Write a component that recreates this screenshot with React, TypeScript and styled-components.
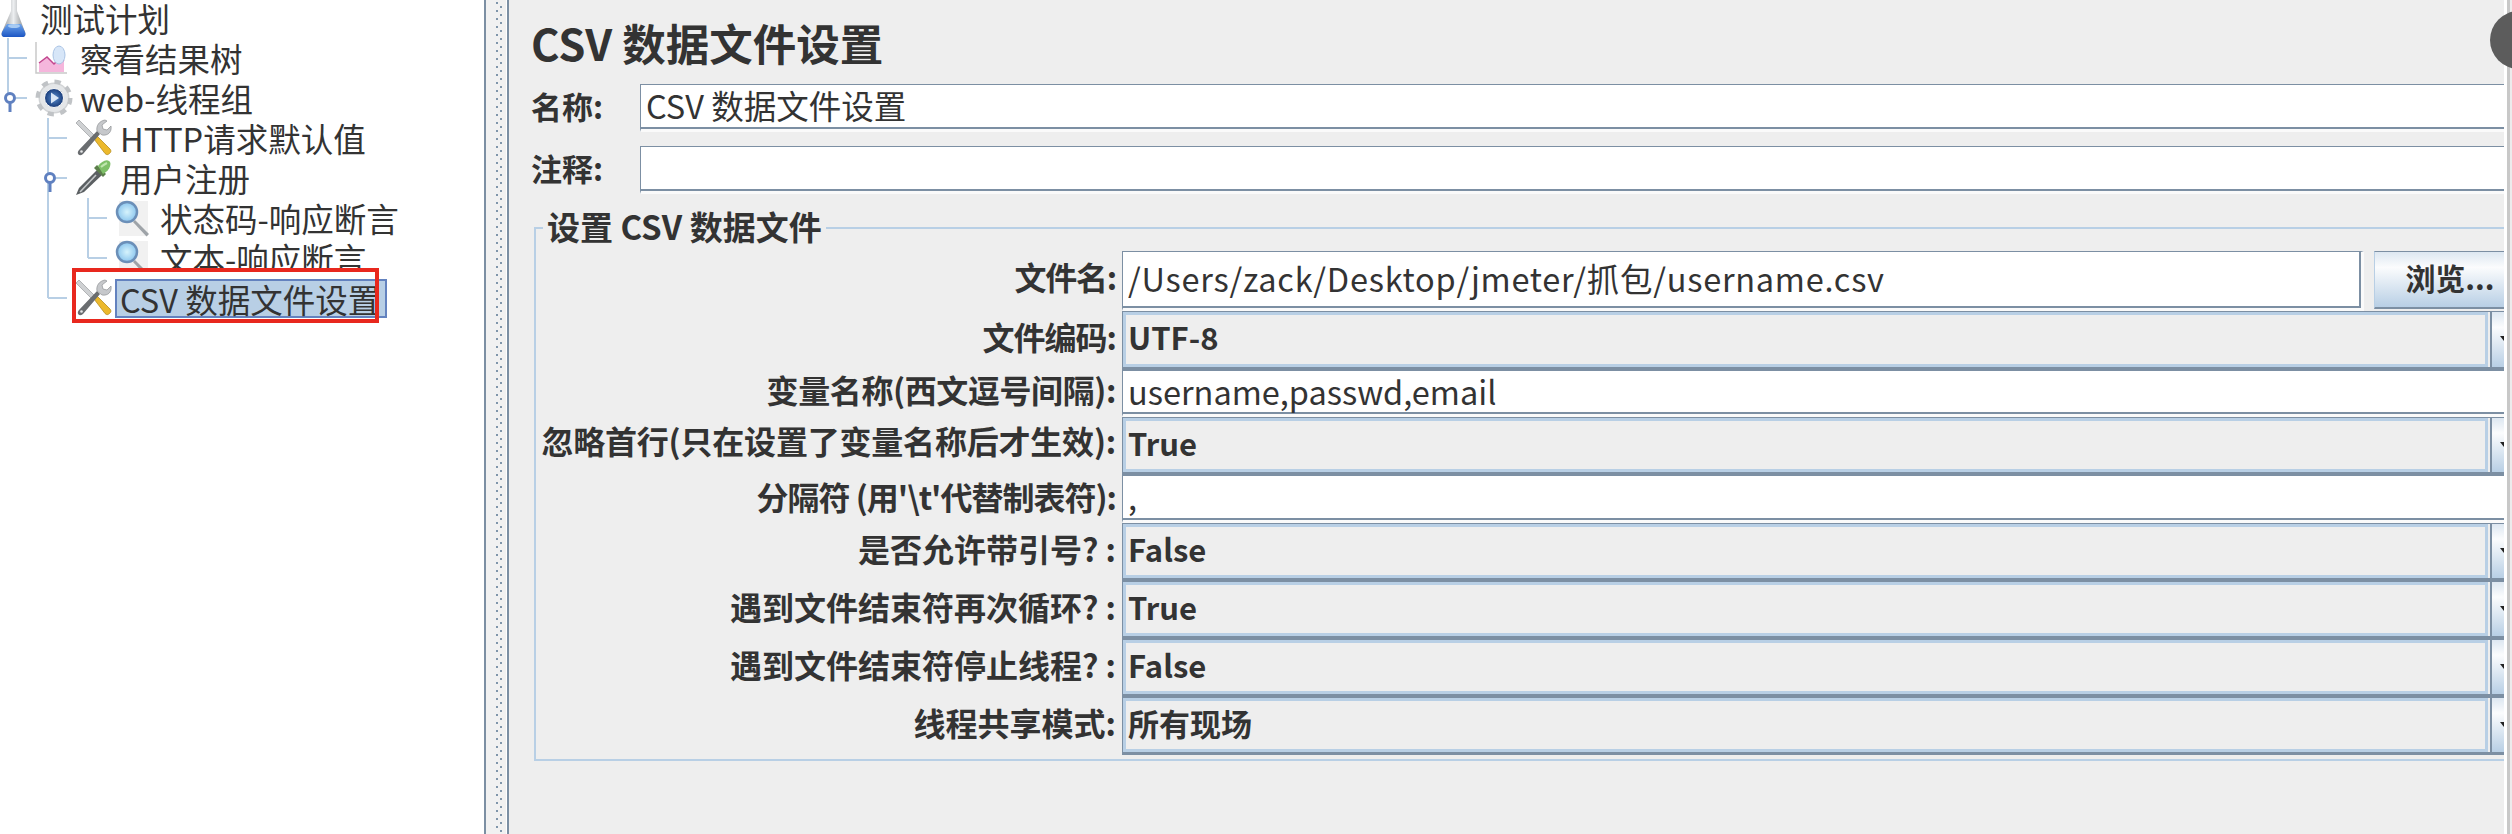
import styled, { createGlobalStyle } from 'styled-components';

const SLATE = '#7c8fa3';
const SKY = '#b8cfe5';
const FONT = '"Noto Sans CJK SC", "Noto Sans", sans-serif';

const GlobalStyle = createGlobalStyle`
  html, body {
    margin: 0;
    padding: 0;
    background: #fff;
    overflow: hidden;
  }
`;

const Window = styled.div`
  position: relative;
  display: flex;
  width: 2512px;
  height: 834px;
  overflow: hidden;
  font-family: ${FONT};
  color: #333;
`;

const TreePane = styled.div`
  flex: none;
  width: 484px;
  background: #fff;
`;

const TreeRow = styled.div<{ $selected?: boolean }>`
  position: relative;
  display: flex;
  align-items: center;
  height: 40px;
  white-space: nowrap;
  &:first-child {
    height: 36px;
    margin-bottom: 2px;
  }
  ${(p) =>
    p.$selected &&
    `
    z-index: 1;
    &::before {
      content: '';
      position: absolute;
      left: 72px;
      top: -10px;
      width: 307px;
      height: 55px;
      background: #fff;
    }
    &::after {
      content: '';
      position: absolute;
      left: 72px;
      top: -10px;
      width: 307px;
      height: 55px;
      box-sizing: border-box;
      border: 4px solid #e8281e;
    }
  `}
`;

const Connector = styled.svg`
  flex: none;
  display: block;
  height: 40px;
`;

const IconSlot = styled.div<{ $root: boolean }>`
  position: relative;
  flex: none;
  display: flex;
  align-items: center;
  width: ${(p) => (p.$root ? 35 : 40)}px;
  height: 36px;
  svg {
    display: block;
    flex: none;
    filter: blur(0.4px);
  }
`;

const NodeLabel = styled.span<{ $selected?: boolean }>`
  position: relative;
  box-sizing: border-box;
  padding: 0 3px;
  border: solid transparent;
  border-width: 0 2px;
  font-size: 32.5px;
  line-height: 36px;
  ${(p) =>
    p.$selected &&
    `
    height: 39px;
    padding-right: 5px;
    line-height: 35px;
    border: 2px solid #6382bf;
    background: ${SKY};
  `}
`;

const Divider = styled.div`
  flex: none;
  width: 25px;
  height: 100%;
  box-sizing: border-box;
  border-left: 2px solid ${SLATE};
  border-right: 2px solid ${SLATE};
  background:
    linear-gradient(#fff, #fff) 20px 0 / 1px 100% no-repeat,
    repeating-linear-gradient(#7f95aa 0 2px, transparent 2px 8px) 10px 2px / 2px 100% no-repeat,
    repeating-linear-gradient(#7f95aa 0 2px, transparent 2px 8px) 14px 6px / 2px 100% no-repeat,
    #f1f1f1;
`;

const FormPane = styled.div`
  flex: none;
  width: 1995px;
  height: 100%;
  box-sizing: border-box;
  padding-left: 22px;
  background: #eee;
`;

const Title = styled.h1`
  margin: 0;
  height: 84px;
  font-size: 43.5px;
  line-height: 86px;
  font-weight: 700;
`;

const NameRow = styled.div`
  display: flex;
  align-items: stretch;
  height: 48px;
  margin-bottom: 14px;
`;

const NameLabel = styled.label`
  flex: none;
  width: 109px;
  font-size: 31px;
  font-weight: 700;
  line-height: 44px;
`;

const TextInput = styled.input`
  flex: 1;
  min-width: 0;
  box-sizing: border-box;
  padding: 0 0 5px 5px;
  border: 0;
  border-top: 1px solid ${SLATE};
  border-left: 1px solid ${SLATE};
  border-bottom: 3px solid #fafafa;
  outline: none;
  border-radius: 0;
  background: #fff;
  box-shadow: inset 0 -2px 0 ${SLATE};
  color: #333;
  font-family: ${FONT};
  font-size: 32.5px;
`;

const FileInput = styled(TextInput)`
  border-right: 3px solid #fafafa;
  box-shadow: inset 0 -2px 0 ${SLATE}, inset -2px 0 0 ${SLATE};
  letter-spacing: 0.75px;
`;

const Group = styled.fieldset`
  margin: 11px 0 0 3px;
  padding: 3px 0 4px 0;
  min-width: 0;
  border: 2px solid ${SKY};
  border-right: 0;
`;

const GroupTitle = styled.legend`
  margin-left: 7px;
  padding: 0 4px 4px;
  font-size: 33px;
  font-weight: 700;
  line-height: 36px;
`;

const FieldRow = styled.div<{ $height: number }>`
  display: flex;
  align-items: stretch;
  height: ${(p) => p.$height}px;
`;

const FieldLabel = styled.label<{ $line?: number; $squeeze?: number }>`
  flex: none;
  box-sizing: border-box;
  width: 586px;
  padding-right: 6px;
  text-align: right;
  font-size: 32px;
  font-weight: 700;
  line-height: ${(p) => p.$line ?? 50}px;
  letter-spacing: ${(p) => p.$squeeze ?? 0}px;
  white-space: nowrap;
`;

const BrowseButton = styled.button`
  flex: none;
  width: 130px;
  height: 58px;
  margin-left: 10px;
  padding: 0 0 6px 21px;
  border: 0;
  border-top: 1px solid ${SLATE};
  border-left: 1px solid ${SKY};
  border-bottom: 2px solid ${SLATE};
  background: linear-gradient(#dde7f1, #fbfcfd 28%, ${SKY});
  color: #333;
  font-family: ${FONT};
  font-size: 30px;
  font-weight: 700;
  white-space: nowrap;
`;

const Combo = styled.div`
  flex: 1;
  display: flex;
  min-width: 0;
  box-sizing: border-box;
  border-top: 1px solid ${SLATE};
  border-left: 1px solid ${SLATE};
  border-bottom: 3px solid ${SLATE};
`;

const ComboValue = styled.div`
  flex: 1;
  box-sizing: border-box;
  padding-left: 2px;
  border: 3px solid ${SKY};
  background: #eee;
  font-size: 31px;
  font-weight: 700;
  line-height: 44px;
`;

const ComboArrow = styled.div`
  flex: none;
  display: flex;
  justify-content: flex-end;
  width: 14px;
  margin-left: 2px;
  padding-top: 24px;
  box-sizing: border-box;
  overflow: hidden;
  border-left: 2px solid ${SLATE};
  background: linear-gradient(#dde7f1, #fbfcfd 28%, ${SKY});
`;

const ArrowGlyph = styled.span`
  flex: none;
  width: 0;
  height: 0;
  margin-right: -4px;
  border-left: 4px solid transparent;
  border-right: 4px solid transparent;
  border-top: 5px solid #222;
`;

const EdgeStrip = styled.div`
  flex: none;
  width: 8px;
  height: 100%;
  background: linear-gradient(90deg, #fff 0 3px, #c8c8c8 3px 6px, #ececec 6px);
`;

const ScrollBlob = styled.div`
  position: absolute;
  top: 11px;
  right: -36px;
  width: 58px;
  height: 58px;
  border-radius: 50%;
  background: #5c5c5c;
`;

function FlaskIcon() {
  return (
    <svg width="27" height="37" viewBox="0 0 27 37">
      <defs>
        <linearGradient id="flaskGlass" x1="0" x2="1">
          <stop offset="0" stopColor="#8e9194" />
          <stop offset="0.5" stopColor="#eceef0" />
          <stop offset="1" stopColor="#85888b" />
        </linearGradient>
        <linearGradient id="flaskLiquid" x1="0" y1="0" x2="0" y2="1">
          <stop offset="0" stopColor="#6ea4ea" />
          <stop offset="1" stopColor="#1c56c4" />
        </linearGradient>
      </defs>
      <path d="M11 0h6v11l8 21c1 3 0 5-3 5H5c-3 0-4-2-3-5l9-21z" fill="url(#flaskGlass)" />
      <path d="M7 24h14l4 8c1 3 0 5-3 5H5c-3 0-4-2-3-5z" fill="url(#flaskLiquid)" />
      <ellipse cx="14" cy="26" rx="6" ry="2" fill="#a8cbf3" />
    </svg>
  );
}

function ChartIcon() {
  return (
    <svg width="34" height="34" viewBox="0 0 34 34">
      <path d="M1 1v31h31" fill="none" stroke="#c9c9c9" strokeWidth="1.5" />
      <path d="M4 31V22l8-6 7 7 6-6 4 3v11z" fill="#f5b6dc" />
      <path d="M4 22l8-6 7 7 6-6 4 3" fill="none" stroke="#c2478f" strokeWidth="1.5" />
      <ellipse cx="24" cy="14" rx="6" ry="9" fill="#d7e6f8" stroke="#a9c3e4" />
    </svg>
  );
}

function GearIcon() {
  return (
    <svg width="38" height="38" viewBox="0 0 38 38">
      <defs>
        <radialGradient id="gearCore">
          <stop offset="0" stopColor="#5b8fd0" />
          <stop offset="1" stopColor="#173a78" />
        </radialGradient>
      </defs>
      <circle cx="19" cy="19" r="15.5" fill="#d2d4d6" stroke="#c0c3c6" strokeWidth="6" strokeDasharray="6 6.17" />
      <circle cx="19" cy="19" r="14" fill="#e4e6e8" />
      <circle cx="19" cy="19" r="9.5" fill="url(#gearCore)" stroke="#f6f7f8" strokeWidth="1" />
      <path d="M16 13.5l8 5.5-8 5.5z" fill="#d9e6f6" />
    </svg>
  );
}

function ToolsIcon() {
  return (
    <svg width="37" height="38" viewBox="0 0 37 38">
      <path d="M1 4l3-3 16 16-3 3z" fill="#cfd1d3" stroke="#9b9d9f" strokeWidth="0.7" />
      <path d="M19 20l3-3 13 13c1.500 2 1 3-.5 4.500s-3 1.500-4.500 0z" fill="#ecb92c" stroke="#ad8414" strokeWidth="0.7" />
      <path d="M4 31L22 12l3 3L8 35c-2 1.500-3.500 1.500-4.500.5s-1-3 .5-4.500z" fill="#6a6d70" />
      <path d="M22 12c-1-5 2-10 8-11l2 1-5 4 1 4 4 1 4-4c1 6-3 10-9 9z" fill="#c6c8cb" stroke="#8f9295" strokeWidth="0.7" />
      <circle cx="6.500" cy="32.500" r="1.300" fill="#e7e8e9" />
    </svg>
  );
}

function DropperIcon() {
  return (
    <svg width="37" height="38" viewBox="0 0 37 38">
      <path d="M1 36l3-7L22 11l5 5L9 33z" fill="#5b5f62" />
      <path d="M5 33l16-17" stroke="#c4c7c9" strokeWidth="1.600" />
      <path d="M19 9l9 9 3-3-9-9z" fill="#5c7f4b" />
      <path d="M23 7c3-4 8-7 11-5s1 8-3 11l-3 2z" fill="#7fc069" />
      <path d="M26 8c2-2 4-3 6-4" stroke="#bfe6ae" strokeWidth="2" fill="none" />
    </svg>
  );
}

function LensIcon() {
  return (
    <svg width="36" height="37" viewBox="0 0 36 37">
      <defs>
        <radialGradient id="lensGlass">
          <stop offset="0" stopColor="#d6f3fc" />
          <stop offset="1" stopColor="#8cc6ee" />
        </radialGradient>
      </defs>
      <rect x="4" y="1" width="29" height="35" fill="#f1f1f1" />
      <path d="M20 20l14 14-2.500 2.500L18 22z" fill="#9ea3a8" />
      <circle cx="12" cy="12" r="10" fill="url(#lensGlass)" stroke="#6b8fb8" strokeWidth="2.500" />
    </svg>
  );
}

const icons = {
  flask: <FlaskIcon />,
  chart: <ChartIcon />,
  gear: <GearIcon />,
  tools: <ToolsIcon />,
  dropper: <DropperIcon />,
  lens: <LensIcon />,
};

type TreeNode = {
  label: string;
  icon: keyof typeof icons;
  level: number;
  lines?: string;
  handle?: number;
  selected?: boolean;
};

const treeNodes: TreeNode[] = [
  { label: '测试计划', icon: 'flask', level: 0 },
  { label: '察看结果树', icon: 'chart', level: 1, lines: 'M8 0v40M8 20h19' },
  { label: 'web-线程组', icon: 'gear', level: 1, lines: 'M8 0v20M16 20h11', handle: 10 },
  { label: 'HTTP请求默认值', icon: 'tools', level: 2, lines: 'M48 0v40M48 20h19' },
  { label: '用户注册', icon: 'dropper', level: 2, lines: 'M48 0v40M56 20h11', handle: 50 },
  { label: '状态码-响应断言', icon: 'lens', level: 3, lines: 'M48 0v40M88 0v40M88 20h19' },
  { label: '文本-响应断言', icon: 'lens', level: 3, lines: 'M48 0v40M88 0v20M88 20h19' },
  { label: 'CSV 数据文件设置', icon: 'tools', level: 2, lines: 'M48 0v20M48 20h19', selected: true },
];

function TreeItem({ node }: { node: TreeNode }) {
  const connectorWidth = node.level * 40 - 5;
  return (
    <TreeRow $selected={node.selected}>
      {node.level > 0 && (
        <Connector width={connectorWidth} viewBox={`0 0 ${connectorWidth} 40`}>
          <path d={node.lines} fill="none" stroke={SKY} strokeWidth="2" />
          {node.handle !== undefined && (
            <g fill="none" stroke="#5f80c0">
              <circle cx={node.handle} cy="20" r="4.500" strokeWidth="3" fill="#fff" />
              <path d={`M${node.handle} 25v9`} strokeWidth="3" />
            </g>
          )}
        </Connector>
      )}
      <IconSlot $root={node.level === 0}>{icons[node.icon]}</IconSlot>
      <NodeLabel $selected={node.selected}>{node.label}</NodeLabel>
    </TreeRow>
  );
}

function ComboField({ value }: { value: string }) {
  return (
    <Combo>
      <ComboValue>{value}</ComboValue>
      <ComboArrow>
        <ArrowGlyph />
      </ComboArrow>
    </Combo>
  );
}

export default function App() {
  return (
    <>
      <GlobalStyle />
      <Window>
        <TreePane>
          {treeNodes.map((node) => (
            <TreeItem key={node.label} node={node} />
          ))}
        </TreePane>
        <Divider />
        <FormPane>
          <Title>CSV 数据文件设置</Title>
          <NameRow>
            <NameLabel>名称:</NameLabel>
            <TextInput readOnly value="CSV 数据文件设置" />
          </NameRow>
          <NameRow>
            <NameLabel>注释:</NameLabel>
            <TextInput readOnly value="" />
          </NameRow>
          <Group>
            <GroupTitle>设置 CSV 数据文件</GroupTitle>
            <FieldRow $height={60}>
              <FieldLabel $squeeze={-1.2}>文件名:</FieldLabel>
              <FileInput readOnly value="/Users/zack/Desktop/jmeter/抓包/username.csv" />
              <BrowseButton>浏览...</BrowseButton>
            </FieldRow>
            <FieldRow $height={59}>
              <FieldLabel $squeeze={-1}>文件编码:</FieldLabel>
              <ComboField value="UTF-8" />
            </FieldRow>
            <FieldRow $height={47}>
              <FieldLabel $line={38} $squeeze={-0.4}>变量名称(西文逗号间隔):</FieldLabel>
              <TextInput readOnly value="username,passwd,email" />
            </FieldRow>
            <FieldRow $height={58}>
              <FieldLabel $line={46} $squeeze={-0.2}>忽略首行(只在设置了变量名称后才生效):</FieldLabel>
              <ComboField value="True" />
            </FieldRow>
            <FieldRow $height={48}>
              <FieldLabel $line={42} $squeeze={-1}>分隔符 (用'\t'代替制表符):</FieldLabel>
              <TextInput readOnly value="," />
            </FieldRow>
            <FieldRow $height={58}>
              <FieldLabel>是否允许带引号? :</FieldLabel>
              <ComboField value="False" />
            </FieldRow>
            <FieldRow $height={58}>
              <FieldLabel>遇到文件结束符再次循环? :</FieldLabel>
              <ComboField value="True" />
            </FieldRow>
            <FieldRow $height={58}>
              <FieldLabel>遇到文件结束符停止线程? :</FieldLabel>
              <ComboField value="False" />
            </FieldRow>
            <FieldRow $height={58}>
              <FieldLabel>线程共享模式:</FieldLabel>
              <ComboField value="所有现场" />
            </FieldRow>
          </Group>
        </FormPane>
        <EdgeStrip />
        <ScrollBlob />
      </Window>
    </>
  );
}
